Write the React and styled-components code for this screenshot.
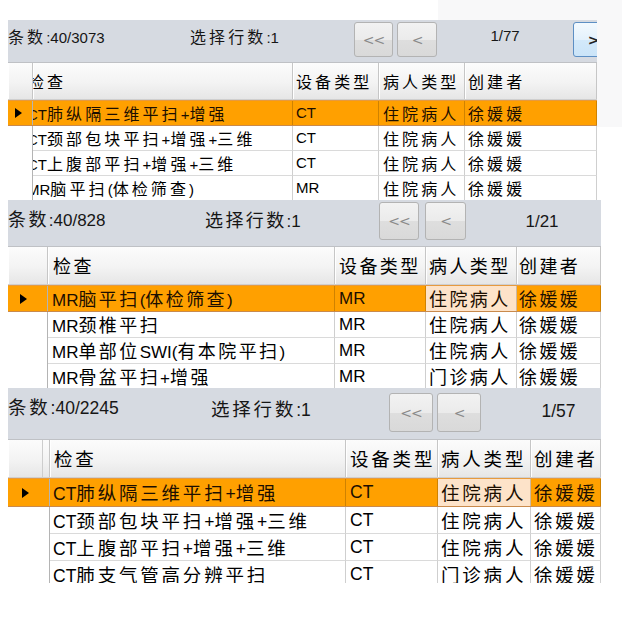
import React from "react";
import styled, { createGlobalStyle, css } from "styled-components";

const GlobalStyle = createGlobalStyle`
  html, body { margin: 0; padding: 0; background: #ffffff; }
  body { font-family: "Liberation Sans", "Noto Sans CJK SC", sans-serif; color: #000; }
`;

const Page = styled.div`
  position: relative;
  width: 622px;
  height: 625px;
  overflow: hidden;
  box-sizing: border-box;
  padding: 20px 0 0 8px;
  display: flex;
  flex-direction: column;
  background: #fff;
`;

const Backdrop = styled.div`
  position: absolute;
  left: 438px;
  top: 0;
  width: 184px;
  height: 127px;
  background: #f8f8f9;
`;

const Panel = styled.section`
  position: relative;
  width: ${(p) => p.$w}px;
  height: ${(p) => p.$h}px;
  overflow: hidden;
  flex: none;
  font-size: ${(p) => p.$fs}px;
  --cjk-ls: ${(p) => p.$ls}px;
  --cjk-fs: ${(p) => p.$cfs}px;
  background: #fff;
`;

const Cjk = styled.span`
  font-family: "Noto Sans CJK SC", sans-serif;
  font-size: var(--cjk-fs);
  letter-spacing: var(--cjk-ls);
`;

const CJK_RE = /([\u2e80-\u9fff\uff00-\uffef]+)/;

function Txt({ text }) {
  return text
    .split(CJK_RE)
    .map((part, i) =>
      i % 2 === 1 ? <Cjk key={i}>{part}</Cjk> : part ? <React.Fragment key={i}>{part}</React.Fragment> : null
    );
}

const StatusBar = styled.div`
  display: grid;
  grid-template-columns: ${(p) => p.$cols};
  align-items: start;
  height: ${(p) => p.$h}px;
  box-sizing: border-box;
  background: #d6dae1;
  border-bottom: 1px solid #bfc1c5;
`;

const StatusText = styled.div`
  line-height: 20px;
  margin-top: ${(p) => p.$top - 10}px;
  white-space: nowrap;
  color: #161616;
  justify-self: ${(p) => (p.$center ? "center" : "start")};
`;

const NavButton = styled.div`
  width: ${(p) => p.$w}px;
  height: ${(p) => p.$h}px;
  margin-top: ${(p) => p.$top}px;
  box-sizing: border-box;
  border-radius: 3px;
  display: flex;
  align-items: center;
  justify-content: center;
  font-family: "DejaVu Sans", sans-serif;
  font-size: 14px;
  letter-spacing: -1px;
  ${(p) =>
    p.$active
      ? css`
          border: 1px solid #5d8fc4;
          background: linear-gradient(#f3f9fe 0%, #e4f1fc 50%, #d3e9fa 51%, #cbe4f8 100%);
          color: #222;
          font-weight: bold;
        `
      : css`
          border: 1px solid #b3b3b3;
          background: linear-gradient(#f2f2f2 0%, #ebebeb 50%, #dedede 51%, #d9d9d9 100%);
          color: #8a8a8a;
        `}
`;

const HeaderRow = styled.div`
  display: grid;
  grid-template-columns: ${(p) => p.$cols};
  height: ${(p) => p.$h}px;
  box-sizing: border-box;
  background: linear-gradient(#fcfcfc 0%, #f3f3f3 55%, #e6e6e6 100%);
  border-bottom: 1px solid #cfcfcf;
`;

const HeaderCell = styled.div`
  position: relative;
  overflow: hidden;
  white-space: nowrap;
  box-sizing: border-box;
  padding-left: ${(p) => p.$pad}px;
  text-indent: ${(p) => p.$shift || 0}px;
  line-height: ${(p) => p.$lh}px;
  border-right: 1px solid #c6c6c6;
  box-shadow: inset 1px 0 0 #ffffff;
  ${(p) =>
    p.$split &&
    css`
      &::after {
        content: "";
        position: absolute;
        top: 0;
        bottom: 0;
        left: ${p.$split}px;
        border-left: 1px solid #cdcdcd;
      }
    `}
`;

const Row = styled.div`
  display: grid;
  grid-template-columns: ${(p) => p.$cols};
  height: ${(p) => p.$h}px;
  box-sizing: border-box;
  background: ${(p) => (p.$sel ? "#ffa000" : "#ffffff")};
  ${(p) =>
    p.$sel &&
    css`
      border-top: 1px solid #e69a3f;
      border-bottom: 1px solid #c98a4c;
    `}
`;

const Cell = styled.div`
  overflow: hidden;
  white-space: nowrap;
  box-sizing: border-box;
  padding-left: ${(p) => p.$pad}px;
  text-indent: ${(p) => p.$shift || 0}px;
  line-height: ${(p) => p.$lh}px;
  border-right: 1px solid rgba(0, 0, 0, 0.19);
  border-bottom: ${(p) => (p.$sel ? "none" : "1px solid #dadada")};
  background: ${(p) => (p.$focus ? "#fde3c9" : "transparent")};
  color: ${(p) => (p.$sel ? "#1b0e00" : "#000")};
`;

const RowHead = styled.div`
  display: flex;
  align-items: center;
  box-sizing: border-box;
  padding-left: ${(p) => p.$arrowX}px;
  border-right: 1px solid #b4b4b4;
`;

const Arrow = styled.span`
  width: 0;
  height: 0;
  border-left: 7px solid #000;
  border-top: 5.5px solid transparent;
  border-bottom: 5.5px solid transparent;
`;

const HEADERS = ["检查", "设备类型", "病人类型", "创建者"];

const panels = [
  {
    w: 589,
    h: 180,
    fs: 15,
    cfs: 16,
    ls: 3.1,
    status: {
      h: 43,
      cols: "182px 164px 43px 40px 136px 40px",
      btn: [39, 40],
      btnH: 35,
      btnTop: 2,
      count: "条数:40/3073",
      countTop: 16,
      selTop: 16,
      page: "1/77",
      pageTop: 15.5,
      next: true,
    },
    cols: "25px 260px 86px 86px 1fr",
    pads: [0, 0, 3, 4, 3],
    shift: -6,
    headerH: 37,
    selH: 26,
    rowH: 25,
    arrowX: 7,
    focus: false,
    rows: [
      ["CT肺纵隔三维平扫+增强", "CT", "住院病人", "徐媛媛"],
      ["CT颈部包块平扫+增强+三维", "CT", "住院病人", "徐媛媛"],
      ["CT上腹部平扫+增强+三维", "CT", "住院病人", "徐媛媛"],
      ["MR脑平扫(体检筛查)", "MR", "住院病人", "徐媛媛"],
    ],
  },
  {
    w: 593,
    h: 188,
    fs: 17,
    cfs: 18,
    ls: 2.4,
    status: {
      h: 47,
      cols: "197px 174px 46px 41px 152px",
      btn: [40, 41],
      btnH: 38,
      btnTop: 2,
      count: "条数:40/828",
      countTop: 18,
      selTop: 19,
      page: "1/21",
      pageTop: 22,
    },
    cols: "40px 287px 91px 91px 1fr",
    pads: [0, 4, 4, 3, 2],
    shift: 0,
    headerH: 38,
    selH: 27,
    rowH: 26,
    arrowX: 12,
    focus: true,
    rows: [
      ["MR脑平扫(体检筛查)", "MR", "住院病人", "徐媛媛"],
      ["MR颈椎平扫", "MR", "住院病人", "徐媛媛"],
      ["MR单部位SWI(有本院平扫)", "MR", "住院病人", "徐媛媛"],
      ["MR骨盆平扫+增强", "MR", "门诊病人", "徐媛媛"],
    ],
  },
  {
    w: 593,
    h: 195,
    fs: 17.5,
    cfs: 18.5,
    ls: 2.8,
    status: {
      h: 52,
      cols: "203px 178px 48px 44px 155px",
      btn: [44, 44],
      btnH: 39,
      btnTop: 5,
      count: "条数:40/2245",
      countTop: 18,
      selTop: 20,
      page: "1/57",
      pageTop: 23,
    },
    cols: "42px 296px 92px 93px 1fr",
    pads: [0, 3, 4, 3, 3],
    shift: 0,
    headerH: 38,
    selH: 29,
    rowH: 27,
    arrowX: 14,
    focus: true,
    split: 34,
    rows: [
      ["CT肺纵隔三维平扫+增强", "CT", "住院病人", "徐媛媛"],
      ["CT颈部包块平扫+增强+三维", "CT", "住院病人", "徐媛媛"],
      ["CT上腹部平扫+增强+三维", "CT", "住院病人", "徐媛媛"],
      ["CT肺支气管高分辨平扫", "CT", "门诊病人", "徐媛媛"],
    ],
  },
];

function GridPanel({ cfg }) {
  const s = cfg.status;
  return (
    <Panel $w={cfg.w} $h={cfg.h} $fs={cfg.fs} $cfs={cfg.cfs} $ls={cfg.ls}>
      <StatusBar $h={s.h} $cols={s.cols}>
        <StatusText $top={s.countTop}>
          <Txt text={s.count} />
        </StatusText>
        <StatusText $top={s.selTop}>
          <Txt text="选择行数:1" />
        </StatusText>
        <NavButton $w={s.btn[0]} $h={s.btnH} $top={s.btnTop}>
          &lt;&lt;
        </NavButton>
        <NavButton $w={s.btn[1]} $h={s.btnH} $top={s.btnTop}>
          &lt;
        </NavButton>
        <StatusText $top={s.pageTop} $center>
          {s.page}
        </StatusText>
        {s.next && (
          <NavButton $w={40} $h={s.btnH} $top={s.btnTop} $active>
            &gt;
          </NavButton>
        )}
      </StatusBar>
      <HeaderRow $cols={cfg.cols} $h={cfg.headerH}>
        <HeaderCell $pad={0} $lh={cfg.headerH - 1} $split={cfg.split} />
        {HEADERS.map((h, i) => (
          <HeaderCell
            key={h}
            $pad={cfg.pads[i + 1]}
            $shift={i === 0 ? cfg.shift + 1 : 0}
            $lh={cfg.headerH - 1}
          >
            <Txt text={h} />
          </HeaderCell>
        ))}
      </HeaderRow>
      {cfg.rows.map((r, ri) => {
        const sel = ri === 0;
        const h = sel ? cfg.selH : cfg.rowH;
        const lh = sel ? cfg.selH - 2 : cfg.rowH - 1;
        return (
          <Row key={ri} $cols={cfg.cols} $h={h} $sel={sel}>
            <RowHead $arrowX={cfg.arrowX}>{sel && <Arrow />}</RowHead>
            {r.map((v, ci) => (
              <Cell
                key={ci}
                $pad={cfg.pads[ci + 1]}
                $shift={ci === 0 ? cfg.shift : 0}
                $lh={lh}
                $sel={sel}
                $focus={sel && cfg.focus && ci === 2}
              >
                <Txt text={v} />
              </Cell>
            ))}
          </Row>
        );
      })}
    </Panel>
  );
}

export default function App() {
  return (
    <>
      <GlobalStyle />
      <Page>
        <Backdrop />
        {panels.map((p, i) => (
          <GridPanel key={i} cfg={p} />
        ))}
      </Page>
    </>
  );
}
